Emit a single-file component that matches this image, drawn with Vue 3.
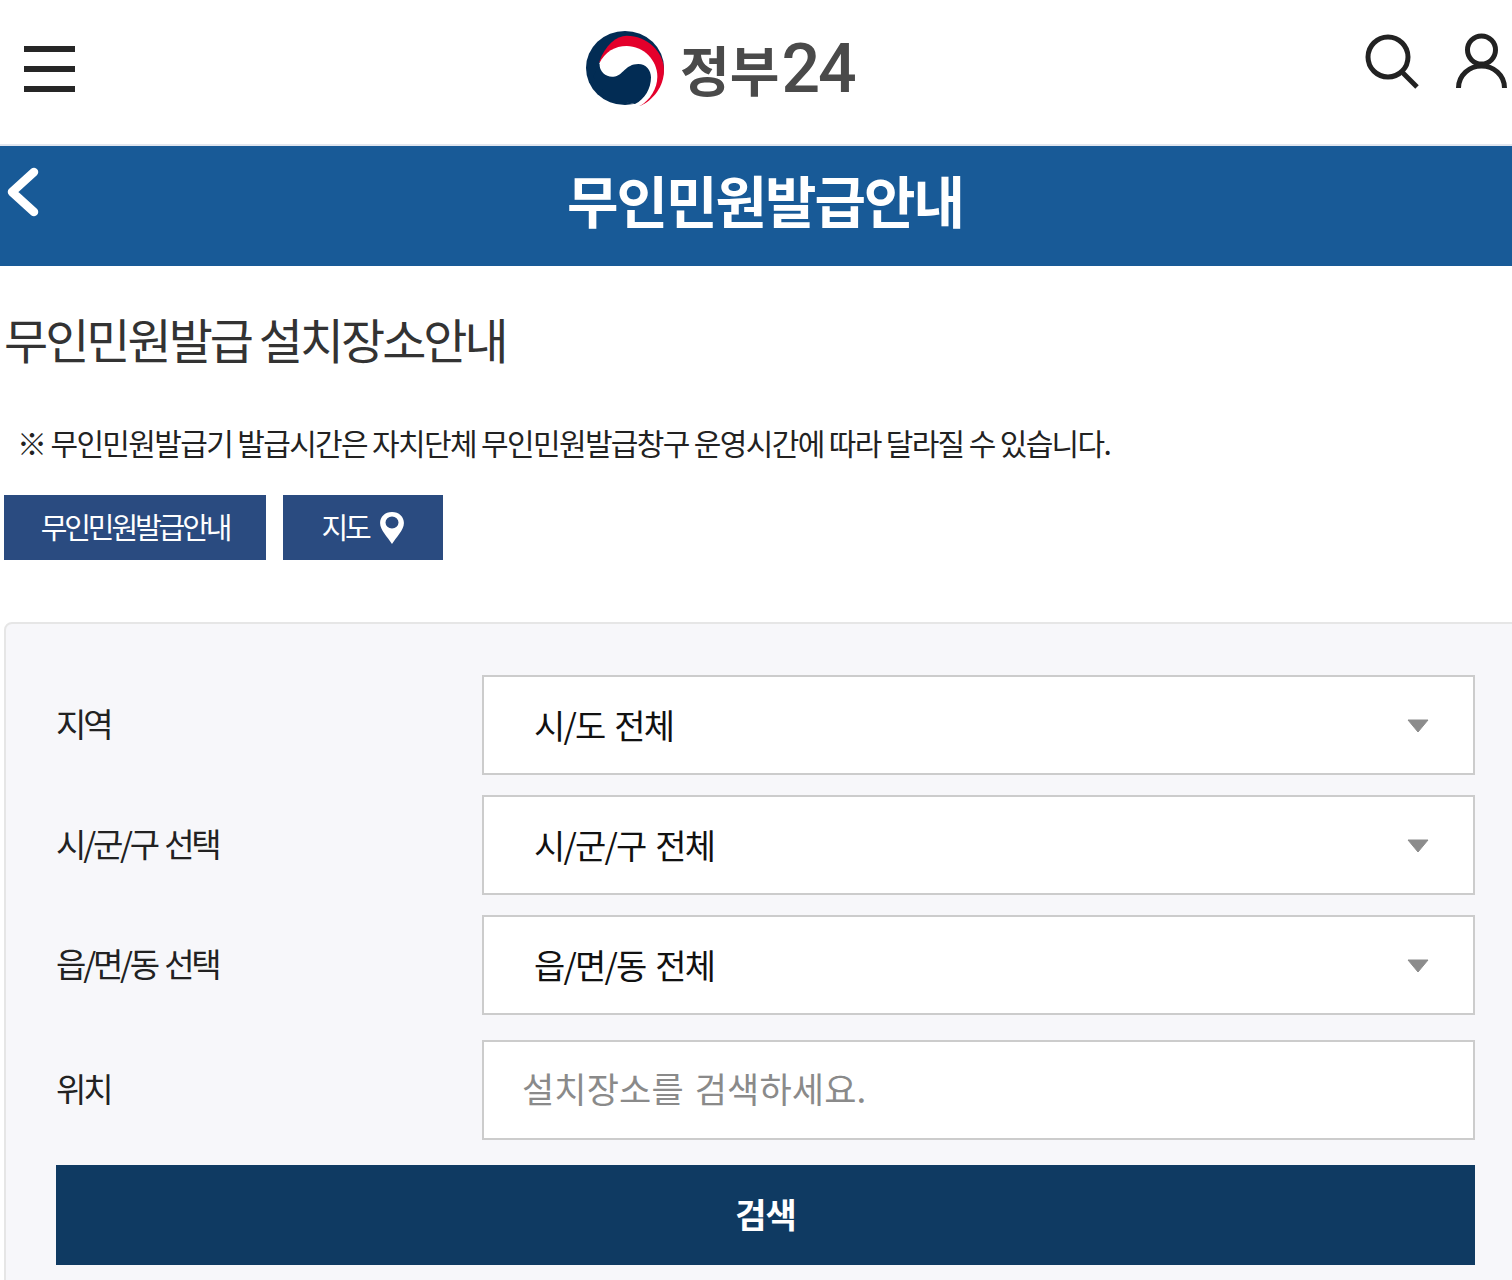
<script setup>
const fields = [
  { label: '지역', value: '시/도 전체' },
  { label: '시/군/구 선택', value: '시/군/구 전체' },
  { label: '읍/면/동 선택', value: '읍/면/동 전체' },
]
</script>

<template>
  <div class="page">
    <header class="top">
      <button class="menu" aria-label="메뉴"><span></span><span></span><span></span></button>
      <div class="logo">
        <svg class="mark" viewBox="45 30 240 231" width="80" height="77">
          <ellipse cx="165" cy="144" rx="117" ry="111" fill="#022c54" />
          <path d="M88 125C105 75 140 47 170 47C230 47 282 95 282 150C282 200 250 240 210 258Z" fill="#e4002b" />
          <path d="M88 130C105 95 135 78 170 78C220 78 262 120 262 170C262 205 240 240 210 258L150 240L88 170Z" fill="#fff" />
          <path d="M88 130C88 158 110 172 130 170C160 168 165 132 205 132C228 132 243 150 243 172C243 205 225 238 195 252L120 240L70 170Z" fill="#022c54" />
        </svg>
        <span class="logo-text">정부<span class="digits">24</span></span>
      </div>
      <div class="tools">
        <svg width="58" height="58" viewBox="0 0 58 58" fill="none" stroke="#222" stroke-width="5">
          <circle cx="27" cy="24" r="20" />
          <path d="M42 40L56 54" />
        </svg>
        <svg width="54" height="58" viewBox="0 0 54 58" fill="none" stroke="#222" stroke-width="5">
          <circle cx="27.5" cy="17" r="14" />
          <path d="M4.5 55C4.5 42 15.5 33 27.5 33S50.5 42 50.5 55" />
        </svg>
      </div>
    </header>

    <div class="bar">
      <svg class="back" width="34" height="52" viewBox="0 0 34 52" fill="none" stroke="#fff" stroke-width="8.5" stroke-linecap="round" stroke-linejoin="round">
        <path d="M28 6L6 26L28 46" />
      </svg>
      <h1>무인민원발급안내</h1>
    </div>

    <h2>무인민원발급 설치장소안내</h2>
    <p class="notice">※ 무인민원발급기 발급시간은 자치단체 무인민원발급창구 운영시간에 따라 달라질 수 있습니다.</p>

    <div class="actions">
      <button class="act wide"><span class="act-label">무인민원발급안내</span></button>
      <button class="act map">
        <span class="act-label">지도</span>
        <svg width="26" height="34" viewBox="0 0 24 34" preserveAspectRatio="none">
          <path fill-rule="evenodd" d="M12 1C5.5 1 1 5.8 1 12C1 19 8 26 12 33C16 26 23 19 23 12C23 5.8 18.5 1 12 1ZM12 5.5A6 6 0 1 1 12 17.5A6 6 0 1 1 12 5.5Z" fill="#fff" />
        </svg>
      </button>
    </div>

    <section class="panel">
      <div v-for="f in fields" :key="f.label" class="row">
        <label>{{ f.label }}</label>
        <div class="box">
          <span class="val">{{ f.value }}</span>
          <svg class="caret" width="22" height="14" viewBox="0 0 22 14"><path d="M1 1H21L11 13Z" fill="#8c8c8c" stroke="#8c8c8c" stroke-linejoin="round" /></svg>
        </div>
      </div>
      <div class="row last">
        <label>위치</label>
        <input class="search" placeholder="설치장소를 검색하세요." />
      </div>
      <button class="go">검색</button>
    </section>
  </div>
</template>

<style>
html, body { margin: 0; background: #fff; overflow: hidden; }
</style>

<style scoped>
.page {
  width: 1512px;
  height: 1280px;
  overflow: hidden;
  font-family: "Noto Sans CJK KR", "Noto Sans", sans-serif;
  color: #111;
}
button { font-family: inherit; border: 0; padding: 0; cursor: pointer; }

.top {
  height: 144px;
  display: flex;
  align-items: flex-start;
  position: relative;
}
.menu {
  width: 51px;
  height: 46px;
  margin: 46px 0 0 24px;
  background: none;
  display: flex;
  flex-direction: column;
  justify-content: space-between;
}
.menu span { display: block; height: 6px; background: #262626; }
.logo {
  display: flex;
  align-items: flex-start;
  gap: 15px;
  margin: 30px 0 0 510px;
  height: 77px;
}
.logo-text {
  font-size: 54px;
  font-weight: 700;
  line-height: 77px;
  color: #4a4a4a;
}
.digits {
  font-family: Roboto, "Liberation Sans", sans-serif;
  font-size: 68px;
  font-weight: 500;
  line-height: 1;
  letter-spacing: -2px;
  margin-left: 2px;
}
.tools {
  display: flex;
  gap: 35px;
  margin: 33px 4px 0 auto;
}

.bar {
  height: 120px;
  border-top: 2px solid #e1e6ef;
  background: #185a97;
  position: relative;
  display: flex;
  justify-content: center;
}
.back { position: absolute; left: 6px; top: 20px; }
h1 {
  margin: 13px 0 0 18px;
  font-size: 56px;
  font-weight: 700;
  line-height: 80px;
  letter-spacing: -2px;
  color: #fff;
}
h2 {
  margin: 39px 0 0 4px;
  font-size: 48px;
  font-weight: 400;
  line-height: 66px;
  letter-spacing: -3px;
  color: #333;
}
.notice {
  margin: 47px 0 0 17px;
  font-size: 30px;
  line-height: 48px;
  letter-spacing: -1.64px;
  color: #222;
}
.actions {
  display: flex;
  gap: 17px;
  margin: 29px 0 0 4px;
}
.act {
  height: 65px;
  background: #2a4b80;
  color: #fff;
  font-size: 29px;
  letter-spacing: -3.1px;
  display: flex;
  align-items: center;
  justify-content: center;
}
.act-label { padding-bottom: 4px; }
.wide { width: 262px; }
.map { width: 160px; gap: 10px; }

.panel {
  box-sizing: border-box;
  margin: 62px -20px 0 4px;
  padding: 51px 55px 20px 50px;
  height: 760px;
  background: #f7f7fa;
  border: 2px solid #e6e6e6;
  border-radius: 8px;
}
.row {
  display: flex;
  align-items: center;
  margin-bottom: 20px;
}
.row.last { margin: 25px 0; }
.row label {
  width: 426px;
  flex: none;
  font-size: 33px;
  letter-spacing: -3.2px;
  word-spacing: 3px;
  color: #222;
  padding-bottom: 4px;
}
.box, .search {
  box-sizing: border-box;
  flex: none;
  width: 993px;
  height: 100px;
  background: #fff;
  border: 2px solid #ccc;
}
.box {
  display: flex;
  align-items: center;
  justify-content: space-between;
  padding: 0 44px 0 50px;
  font-size: 34px;
  letter-spacing: -1.8px;
  word-spacing: 4px;
  color: #111;
}
.val { padding-bottom: 2px; }
.caret { margin-top: 2px; }
.search {
  padding: 0 0 6px 38px;
  font-family: inherit;
  font-size: 35px;
  letter-spacing: 0.15px;
  word-spacing: 3px;
  outline: none;
}
.search::placeholder { color: #8a8a8a; opacity: 1; }
.go {
  display: block;
  width: 1419px;
  height: 100px;
  padding-bottom: 4px;
  background: #0f3a62;
  color: #fff;
  font-size: 34px;
  font-weight: 700;
  letter-spacing: -1px;
}
</style>
